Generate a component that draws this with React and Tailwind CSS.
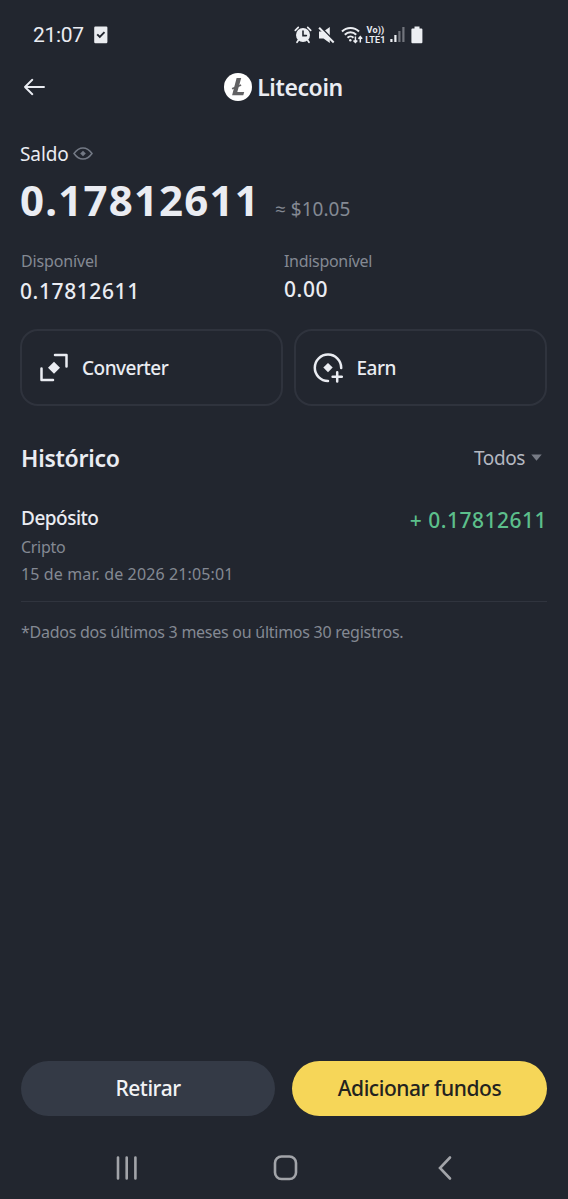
import clsx from 'clsx';

const history = [
  {
    id: 1,
    type: 'Depósito',
    source: 'Cripto',
    date: '15 de mar. de 2026 21:05:01',
    amount: '+ 0.17812611',
  },
];

export default function App() {
  return (
    <div className="flex h-[1199px] w-[568px] flex-col overflow-hidden bg-[#22262f] font-['Noto_Sans','Open_Sans',sans-serif] whitespace-nowrap text-[#eaecf2]">
      <StatusBar />
      <Header />

      <main className="flex flex-1 flex-col pr-[21px] pl-[21px]">
        <Balance />

        {/* Actions */}
        <div className="-ml-px mt-6 flex h-[77px] gap-[11px]">
          <ActionCard icon={<ConvertIcon />} label="Converter" className="w-[264px]" />
          <ActionCard icon={<EarnIcon />} label="Earn" className="w-[253px]" />
        </div>

        <section className="mt-[35px]">
          <div className="flex h-8 items-center justify-between">
            <h2 className="mt-px text-[23px] leading-8 font-semibold tracking-[-0.25px]">Histórico</h2>
            <button className="mt-[2px] mr-[5px] flex items-center gap-[6px] text-[19px] leading-8 tracking-[-0.4px] text-[#b4b8c1]">
              Todos
              <svg className="-mt-px" width="11" height="7" viewBox="0 0 11 7" fill="#777b85">
                <path d="M0.3 0.4h10.4L5.5 6.8z" />
              </svg>
            </button>
          </div>

          {history.map((item) => (
            <HistoryRow key={item.id} item={item} />
          ))}

          <p className="mt-[18px] text-[16px] leading-6 tracking-[-0.26px] text-[#848993]">
            *Dados dos últimos 3 meses ou últimos 30 registros.
          </p>
        </section>
      </main>

      <footer>
        <div className="flex gap-[17px] px-[21px]">
          <PillButton className="w-[254px] bg-[#343a46] text-[#f1f2f5]">Retirar</PillButton>
          <PillButton className="w-[255px] bg-[#f6d658] text-[#23231f]">Adicionar fundos</PillButton>
        </div>
        <NavBar />
      </footer>
    </div>
  );
}

function StatusBar() {
  return (
    <div className="flex h-[69px] items-center justify-between pr-[144px] pl-[33px]">
      <div className="flex items-center gap-[10px]">
        <span className="mt-px font-[Roboto,sans-serif] text-[21px] leading-6 tracking-[-0.3px]">21:07</span>
        <svg width="14" height="18" viewBox="0 0 14 18">
          <rect x="0.2" y="0.5" width="13.2" height="16.8" rx="1.2" fill="#eaecf0" />
          <path d="M3.2 8.3l2.600 2.600 4.700-4.700" fill="none" stroke="#22262f" strokeWidth="1.9" />
        </svg>
      </div>

      <div className="flex items-center">
        {/* Alarm */}
        <svg width="18" height="18" viewBox="0 0 18 18" fill="none" stroke="#eceef2" strokeLinecap="round">
          <circle cx="9" cy="9" r="7" fill="#eceef2" stroke="none" />
          <path d="M1.300 4.300L4.300 1.400M13.700 1.400l3 2.900M4.500 14l-1.500 2.300M13.500 14l1.500 2.300" strokeWidth="1.700" />
          <path d="M9 5v4.600h3.400" stroke="#22262f" strokeWidth="1.600" />
        </svg>
        {/* Muted */}
        <svg className="ml-[6px]" width="17" height="18" viewBox="0 0 17 18">
          <path d="M1 5.400h4.500L11.800 1v16l-6.300-4.600H1z" fill="#eceef2" />
          <path d="M2.400 0.900L17 15.600" stroke="#22262f" strokeWidth="1.500" />
          <path d="M1.100 1.700L15.700 16.500" stroke="#eceef2" strokeWidth="2" />
        </svg>
        {/* Wifi */}
        <svg className="ml-[6px]" width="23" height="18" viewBox="0 0 23 18" fill="none" stroke="#eceef2" strokeWidth="2">
          <path d="M1 5.500a12 12 0 0 1 17 0M3.800 8.700a8 8 0 0 1 11.400 0M6.500 11.700a4.300 4.300 0 0 1 6 0" />
          <circle cx="9.300" cy="14.200" r="1.200" fill="#eceef2" stroke="none" />
          <path d="M14.400 10.500v5.700M12.500 14.400l1.900 2 1.900-2M19.300 16.500v-5.700M17.400 12.700l1.900-2 1.900 2" strokeWidth="1.500" />
        </svg>
        <div className="flex w-[23px] flex-col items-center font-[Roboto,sans-serif] text-[9px] leading-[10px] font-bold tracking-[0.2px]">
          <span>Vo))</span>
          <span>LTE1</span>
        </div>
        {/* Signal */}
        <svg className="ml-[3px]" width="16" height="17" viewBox="0 0 16 17" fill="#eceef2">
          <rect x="0.300" y="13" width="2.200" height="3" />
          <rect x="4.300" y="9" width="2.200" height="7" />
          <rect x="8.300" y="5" width="2.200" height="11" opacity="0.4" />
          <rect x="12.300" y="1" width="2.200" height="15" opacity="0.4" />
        </svg>
        {/* Battery */}
        <svg className="ml-[5px]" width="13" height="18" viewBox="0 0 13 18" fill="#eceef2">
          <path d="M3.500 0.500h5v2h1.900a1 1 0 0 1 1 1v12.800a1 1 0 0 1-1 1H1.400a1 1 0 0 1-1-1V3.500a1 1 0 0 1 1-1h2.100z" />
        </svg>
      </div>
    </div>
  );
}

function Header() {
  return (
    <header className="grid h-9 grid-cols-[1fr_auto_1fr] items-center px-[24px]">
      <button aria-label="Voltar">
        <svg width="22" height="18" viewBox="0 0 22 18" fill="none" stroke="#eaecf2" strokeWidth="1.9" strokeLinecap="round" strokeLinejoin="round">
          <path d="M1 9h19M8.300 1.800L1 9l7.300 7.200" />
        </svg>
      </button>
      <div className="-ml-px flex items-center gap-[5px]">
        <svg width="28" height="28" viewBox="0 0 28 28">
          <circle cx="14" cy="14" r="14" fill="#fff" />
          <path d="M12.600 5h4.600l-3.900 14h6.900l-0.900 3.300H8.100z" fill="#626264" />
          <path d="M8.100 15.800l9-3.800" stroke="#626264" strokeWidth="1.700" />
        </svg>
        <h1 className="text-[23px] leading-8 font-semibold tracking-[-0.4px]">Litecoin</h1>
      </div>
    </header>
  );
}

function Balance() {
  return (
    <section>
      <div className="mt-[35px] flex h-7 items-center gap-[4px]">
        <span className="-ml-px text-[19px] leading-7 tracking-[-0.1px]">Saldo</span>
        <svg className="-mt-px" width="20" height="13" viewBox="0 0 20 13" fill="none" stroke="#737985" strokeWidth="1.500">
          <path d="M1 6.500C3.500 3 6.500 0.900 10 0.900s6.500 2.100 9 5.600c-2.500 3.500-5.500 5.600-9 5.600S3.500 10 1 6.500z" />
          <path d="M10 3.700l2.800 2.800L10 9.300 7.200 6.500z" fill="#737985" stroke="none" />
        </svg>
      </div>

      <div className="mt-[8px] flex h-12 items-baseline">
        <span className="-ml-px text-[42px] leading-[48px] font-bold tracking-[1.2px]">0.17812611</span>
        <span className="ml-[15px] text-[19px] text-[#848993]">≈ $10.05</span>
      </div>

      <div className="mt-[25px] flex h-14">
        <div className="w-[263px]">
          <p className="text-[16px] leading-6 tracking-[-0.15px] text-[#848993]">Disponível</p>
          <p className="mt-1 -ml-px text-[21px] leading-7 font-medium tracking-[0.6px]">0.17812611</p>
        </div>
        <div>
          <p className="text-[16px] leading-6 tracking-[-0.3px] text-[#848993]">Indisponível</p>
          <p className="mt-[2px] text-[21px] leading-7 font-medium tracking-[0.6px]">0.00</p>
        </div>
      </div>
    </section>
  );
}

function ActionCard({ icon, label, className }) {
  return (
    <button
      className={clsx(
        'flex items-center gap-[13px] rounded-[18px] border-2 border-[#2f333d] pl-[17px] text-[19px] font-medium tracking-[-0.5px]',
        className
      )}
    >
      {icon}
      <span className="mt-px">{label}</span>
    </button>
  );
}

function HistoryRow({ item }) {
  return (
    <div className="mt-[31px] h-[98px] border-b border-[#30343e]">
      <div className="flex h-7 justify-between">
        <span className="text-[19px] leading-7 font-medium tracking-[-0.5px]">{item.type}</span>
        <span className="mt-[2px] text-[21px] leading-7 font-medium tracking-[0.5px] text-[#5cbf8b]">{item.amount}</span>
      </div>
      <p className="mt-[3px] text-[16px] leading-6 tracking-[-0.3px] text-[#848993]">{item.source}</p>
      <p className="mt-[3px] text-[16px] leading-6 tracking-[0.12px] text-[#848993]">{item.date}</p>
    </div>
  );
}

function PillButton({ className, children }) {
  return (
    <button className={clsx('h-[55px] rounded-full text-[21px] font-medium tracking-[-0.45px]', className)}>
      {children}
    </button>
  );
}

function NavBar() {
  return (
    <nav className="flex h-[83px] items-center justify-between pt-[20px] pr-[115px] pl-[115px]">
      <svg width="24" height="26" viewBox="0 0 24 26" stroke="#a2a4a9" strokeWidth="2.600" strokeLinecap="round">
        <path d="M3 2.500v21M11.700 2.500v21M20.400 2.500v21" />
      </svg>
      <svg className="-ml-[4px]" width="26" height="26" viewBox="0 0 26 26" fill="none" stroke="#a2a4a9" strokeWidth="2.600">
        <rect x="2" y="1.500" width="21" height="22.500" rx="6.500" />
      </svg>
      <svg width="16" height="26" viewBox="0 0 16 26" fill="none" stroke="#a2a4a9" strokeWidth="2.600" strokeLinecap="round">
        <path d="M13 2.500L3 13l10 10.500" />
      </svg>
    </nav>
  );
}

function ConvertIcon() {
  return (
    <svg width="30" height="30" viewBox="0 0 30 30" fill="none" stroke="#eaecf2" strokeWidth="2.500" strokeLinecap="round" strokeLinejoin="round">
      <path d="M16 2h11.500V13.500M2.500 15.500v11.500H14" />
      <path d="M15 8.700l6 6-6 6-6-6z" fill="#eaecf2" stroke="none" />
    </svg>
  );
}

function EarnIcon() {
  return (
    <svg width="30" height="30" viewBox="0 0 30 30" fill="none" stroke="#eaecf2" strokeWidth="2.500" strokeLinecap="round">
      <path d="M28.200 15A13.200 13.200 0 1 0 15 28M24.200 19.200v9.200M19.600 23.800h9.200" />
      <path d="M15 9.900l4.700 4.700-4.700 4.700-4.700-4.700z" fill="#eaecf2" stroke="none" />
    </svg>
  );
}
